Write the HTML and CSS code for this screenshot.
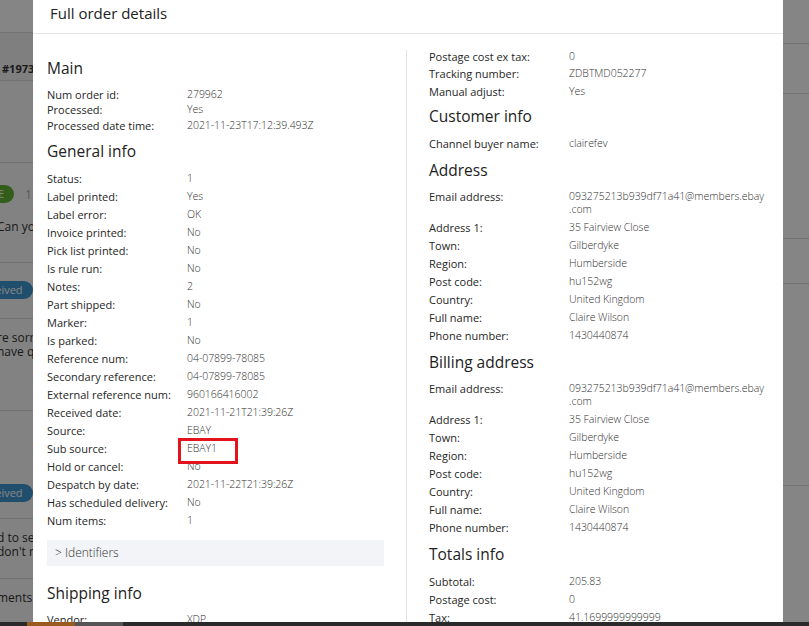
FILE: index.html
```html
<!DOCTYPE html>
<html lang="en">
<head>
<meta charset="utf-8">
<title>Full order details</title>
<link rel="stylesheet" href="styles.css">
</head>
<body>
<div class="page">
  <div class="page-left">
    <div class="pl-top"></div>
    <div class="pl-order"><span class="pl-bold">#19732</span></div>
    <div class="pl-gap"></div>
    <div class="pl-status"><span class="pill green">E</span><span class="pl-num">11</span></div>
    <div class="pl-msg">Can you</div>
    <div class="pl-status2"><span class="pill blue">Received</span></div>
    <div class="pl-msg2">re sorry<br>have qu</div>
    <div class="pl-status3"><span class="pill blue">Received</span></div>
    <div class="pl-msg3">d to se<br>don't mi</div>
    <div class="pl-foot">ments</div>
  </div>
  <div class="page-right">
    <div class="pr-top"></div>
    <div class="pr-btn-row"><span class="pr-btn">ket handled</span></div>
    <div class="pr-head">er Details</div>
    <div class="pr-link">re Wilson</div>
    <div class="pr-small blue-t">0932</div>
    <div class="pr-small blue-t">1430</div>
    <div class="pr-addr">35 Fair<br>Kingdom</div>
    <div class="pr-badge-row"><span class="pr-badge">2</span></div>
    <div class="pr-head2">etails</div>
    <div class="pr-lbls"><span>ate:</span><span>tus:</span><span>Number</span><span>Service</span><span>ery Date</span></div>
    <div class="pr-head3">: Details</div>
    <div class="pr-info">Info:</div>
    <div class="pr-prod"><span class="blue-t">ppel S</span><span class="blue-t">narok 2</span><span>U: BRA</span></div>
    <div class="pr-price">: &nbsp;£2</div>
  </div>
</div>

<div class="backdrop"></div>

<div class="modal">
  <div class="modal-header"><h2 class="modal-title">Full order details</h2></div>
  <div class="modal-body">
    <div class="col col-left">
      <h3 class="sec-title first">Main</h3>
      <div class="rows tight">
        <div class="row"><span class="lbl">Num order id:</span><span class="val">279962</span></div>
        <div class="row"><span class="lbl">Processed:</span><span class="val">Yes</span></div>
        <div class="row"><span class="lbl">Processed date time:</span><span class="val">2021-11-23T17:12:39.493Z</span></div>
      </div>
      <h3 class="sec-title mb-wide">General info</h3>
      <div class="rows">
        <div class="row"><span class="lbl">Status:</span><span class="val">1</span></div>
        <div class="row"><span class="lbl">Label printed:</span><span class="val">Yes</span></div>
        <div class="row"><span class="lbl">Label error:</span><span class="val">OK</span></div>
        <div class="row"><span class="lbl">Invoice printed:</span><span class="val">No</span></div>
        <div class="row"><span class="lbl">Pick list printed:</span><span class="val">No</span></div>
        <div class="row"><span class="lbl">Is rule run:</span><span class="val">No</span></div>
        <div class="row"><span class="lbl">Notes:</span><span class="val">2</span></div>
        <div class="row"><span class="lbl">Part shipped:</span><span class="val">No</span></div>
        <div class="row"><span class="lbl">Marker:</span><span class="val">1</span></div>
        <div class="row"><span class="lbl">Is parked:</span><span class="val">No</span></div>
        <div class="row"><span class="lbl">Reference num:</span><span class="val">04-07899-78085</span></div>
        <div class="row"><span class="lbl">Secondary reference:</span><span class="val">04-07899-78085</span></div>
        <div class="row"><span class="lbl">External reference num:</span><span class="val">960166416002</span></div>
        <div class="row"><span class="lbl">Received date:</span><span class="val">2021-11-21T21:39:26Z</span></div>
        <div class="row"><span class="lbl">Source:</span><span class="val">EBAY</span></div>
        <div class="row"><span class="lbl">Sub source:</span><span class="val marked">EBAY1<span class="annot"></span></span></div>
        <div class="row"><span class="lbl">Hold or cancel:</span><span class="val">No</span></div>
        <div class="row"><span class="lbl">Despatch by date:</span><span class="val">2021-11-22T21:39:26Z</span></div>
        <div class="row"><span class="lbl">Has scheduled delivery:</span><span class="val">No</span></div>
        <div class="row"><span class="lbl">Num items:</span><span class="val">1</span></div>
      </div>
      <div class="collapse">&gt; Identifiers</div>
      <h3 class="sec-title">Shipping info</h3>
      <div class="rows">
        <div class="row"><span class="lbl">Vendor:</span><span class="val">XDP</span></div>
        <div class="row"><span class="lbl">Postal service name:</span><span class="val">Standard</span></div>
      </div>
    </div>
    <div class="col col-right">
      <div class="rows snug">
        <div class="row"><span class="lbl">Postage cost ex tax:</span><span class="val">0</span></div>
        <div class="row"><span class="lbl">Tracking number:</span><span class="val">ZDBTMD052277</span></div>
        <div class="row"><span class="lbl">Manual adjust:</span><span class="val">Yes</span></div>
      </div>
      <h3 class="sec-title mb-wide">Customer info</h3>
      <div class="rows">
        <div class="row"><span class="lbl">Channel buyer name:</span><span class="val">clairefev</span></div>
      </div>
      <h3 class="sec-title mt-wide">Address</h3>
      <div class="rows">
        <div class="row"><span class="lbl">Email address:</span><span class="val">093275213b939df71a41@members.ebay<wbr>.com</span></div>
        <div class="row"><span class="lbl">Address 1:</span><span class="val">35 Fairview Close</span></div>
        <div class="row"><span class="lbl">Town:</span><span class="val">Gilberdyke</span></div>
        <div class="row"><span class="lbl">Region:</span><span class="val">Humberside</span></div>
        <div class="row"><span class="lbl">Post code:</span><span class="val">hu152wg</span></div>
        <div class="row"><span class="lbl">Country:</span><span class="val">United Kingdom</span></div>
        <div class="row"><span class="lbl">Full name:</span><span class="val">Claire Wilson</span></div>
        <div class="row"><span class="lbl">Phone number:</span><span class="val">1430440874</span></div>
      </div>
      <h3 class="sec-title mt-wide">Billing address</h3>
      <div class="rows">
        <div class="row"><span class="lbl">Email address:</span><span class="val">093275213b939df71a41@members.ebay<wbr>.com</span></div>
        <div class="row"><span class="lbl">Address 1:</span><span class="val">35 Fairview Close</span></div>
        <div class="row"><span class="lbl">Town:</span><span class="val">Gilberdyke</span></div>
        <div class="row"><span class="lbl">Region:</span><span class="val">Humberside</span></div>
        <div class="row"><span class="lbl">Post code:</span><span class="val">hu152wg</span></div>
        <div class="row"><span class="lbl">Country:</span><span class="val">United Kingdom</span></div>
        <div class="row"><span class="lbl">Full name:</span><span class="val">Claire Wilson</span></div>
        <div class="row"><span class="lbl">Phone number:</span><span class="val">1430440874</span></div>
      </div>
      <h3 class="sec-title mt-wide mb-wide">Totals info</h3>
      <div class="rows">
        <div class="row"><span class="lbl">Subtotal:</span><span class="val">205.83</span></div>
        <div class="row"><span class="lbl">Postage cost:</span><span class="val">0</span></div>
        <div class="row"><span class="lbl">Tax:</span><span class="val">41.1699999999999</span></div>
        <div class="row"><span class="lbl">Total charge:</span><span class="val">247</span></div>
      </div>
    </div>
  </div>
</div>

<div class="taskbar"><span class="tb-a"></span><span class="tb-b"></span></div>
</body>
</html>
```

FILE: styles.css
```css
* { box-sizing: border-box; }
html, body { margin: 0; padding: 0; }
body {
  width: 809px;
  height: 626px;
  overflow: hidden;
  font-family: "Open Sans", "Noto Sans", sans-serif;
  background: #fafafa;
  color: #333;
}

/* ---------- underlying page ---------- */
.page {
  display: flex;
  justify-content: space-between;
  height: 626px;
  font-size: 12px;
}
.page-left {
  width: 300px;
  display: flex;
  flex-direction: column;
  white-space: nowrap;
}
.pl-top { height: 33px; background: #fff; border-bottom: 1px solid #ddd; }
.pl-order { height: 48px; padding: 27px 0 0 2px; border-bottom: 1px solid #d8d8d8; background: #f3f3f3; }
.pl-bold { font-weight: 700; font-size: 11px; }
.pl-gap { height: 82px; border-bottom: 1px solid #d8d8d8; }
.pl-status { height: 50px; padding-top: 12px; display: flex; align-items: center; gap: 11px; align-self: flex-start; margin-left: -20px; }
.pill { display: inline-block; border-radius: 10px; padding: 2px 10px; color: #fff; font-size: 11px; line-height: 14px; }
.pill.green { background: #62b334; width: 34px; text-align: right; }
.pl-num { color: #aaa; }
.pl-msg { height: 50px; padding-top: 5px; border-bottom: 1px solid #d8d8d8; margin-left: -3px; }
.pl-status2 { height: 56px; padding-top: 18px; border-bottom: 1px solid #d8d8d8; margin-left: -33px; }
.pill.blue { background: #3f97d2; }
.pl-msg2 { height: 92px; padding-top: 12px; line-height: 14px; margin-left: -3px; border-bottom: 1px solid #d8d8d8; }
.pl-status3 { height: 108px; padding-top: 73px; border-bottom: 1px solid #d8d8d8; margin-left: -33px; }
.pl-msg3 { height: 60px; padding-top: 12px; line-height: 14px; margin-left: -3px; border-bottom: 1px solid #d8d8d8; }
.pl-foot { padding-top: 10px; margin-left: -3px; }

.page-right {
  width: 300px;
  padding-left: 198px;
  display: flex;
  flex-direction: column;
  white-space: nowrap;
  background: #fff;
}
.pr-top { height: 44px; border-bottom: 1px solid #ddd; }
.pr-btn-row { height: 50px; padding-top: 3px; border-bottom: 1px solid #ddd; margin-left: -30px; }
.pr-btn { display: inline-block; background: #7cc84a; color: #fff; padding: 3px 10px; font-size: 12px; line-height: 18px; }
.pr-head { font-size: 15px; padding-top: 8px; margin-left: -14px; }
.pr-link { font-size: 14px; color: #3c7fb8; padding-top: 12px; margin-left: -9px; }
.pr-small { font-size: 10px; padding-top: 10px; margin-left: 17px; }
.blue-t { color: #3c7fb8; }
.pr-addr { font-size: 10px; color: #777; line-height: 12px; padding-top: 8px; margin-left: 15px; height: 38px; border-bottom: 1px solid #ddd; }
.pr-badge-row { height: 46px; padding-top: 17px; border-bottom: 1px solid #ddd; }
.pr-badge { display: inline-block; width: 18px; height: 18px; border-radius: 50%; background: #3f97d2; color: #fff; font-size: 9px; line-height: 18px; text-align: center; }
.pr-head2 { font-size: 15px; padding-top: 6px; margin-left: -4px; }
.pr-lbls { display: flex; flex-direction: column; gap: 9px; font-size: 10px; font-weight: 700; padding-top: 41px; margin-left: -6px; height: 176px; border-bottom: 1px solid #ddd; }
.pr-lbls span:nth-child(3), .pr-lbls span:nth-child(4), .pr-lbls span:nth-child(5) { margin-left: -8px; }
.pr-head3 { font-size: 15px; padding-top: 10px; margin-left: -8px; }
.pr-info { font-size: 10px; font-weight: 700; padding-top: 18px; margin-left: -6px; }
.pr-prod { display: flex; flex-direction: column; font-size: 10px; line-height: 11px; color: #888; padding-top: 13px; margin-left: -8px; }
.pr-price { font-size: 13px; font-weight: 700; padding-top: 14px; margin-left: -6px; }

/* ---------- overlay ---------- */
.backdrop {
  position: fixed;
  inset: 0;
  background: rgba(0, 0, 0, 0.48);
}

.modal {
  position: fixed;
  left: 33px;
  top: 0;
  width: 750px;
  height: 640px;
  background: #fff;
  color: #2f2f2f;
}
.modal-header {
  height: 34px;
  padding: 0 17px;
  border-bottom: 1px solid #e6e6e6;
}
.modal-title {
  margin: 0;
  font-size: 15px;
  font-weight: 500;
  line-height: 26px;
  color: #222;
}
.modal-body {
  display: grid;
  grid-template-columns: 359px 1fr;
  padding: 16px 14px 0;
}
.col-left { padding-right: 22px; }
.col-right { padding-left: 22px; border-left: 1px solid #e3e3e3; height: 600px; }

.sec-title {
  margin: 4px 0 10px;
  font-size: 15.5px;
  font-weight: 500;
  line-height: 20px;
  color: #222;
}
.sec-title.first { margin-top: 8px; }
.sec-title.mb-wide { margin-bottom: 11px; }
.sec-title.mt-wide { margin-top: 5px; }

.rows { display: flex; flex-direction: column; }
.row {
  display: grid;
  grid-template-columns: 140px 1fr;
  font-size: 11px;
  line-height: 13px;
  padding-bottom: 5px;
}
.rows.tight .row { padding-bottom: 2.3px; }
.rows.tight { margin-bottom: 7px; }
.rows.snug .row { padding-bottom: 4.3px; }
.lbl { font-weight: 500; color: #262626; }
.val { font-size: 10.5px; font-weight: 300; color: #333; letter-spacing: -0.05px; }

.marked { position: relative; }
.annot {
  position: absolute;
  left: -9px;
  top: -4px;
  width: 60px;
  height: 26px;
  border: 3px solid #e3131b;
}

.collapse {
  margin-top: 8px;
  height: 26px;
  padding-left: 8px;
  background: #f2f4f7;
  font-size: 12px;
  font-weight: 300;
  line-height: 26px;
  color: #333;
}
.collapse + .sec-title { margin-top: 17px; }

.taskbar {
  position: fixed;
  left: 0;
  right: 0;
  bottom: 0;
  height: 4px;
  background: #2a2a2a;
  display: flex;
}
.tb-a { margin-left: 27px; width: 48px; background: #9a5b20; }
.tb-b { width: 48px; background: #555; }
```
